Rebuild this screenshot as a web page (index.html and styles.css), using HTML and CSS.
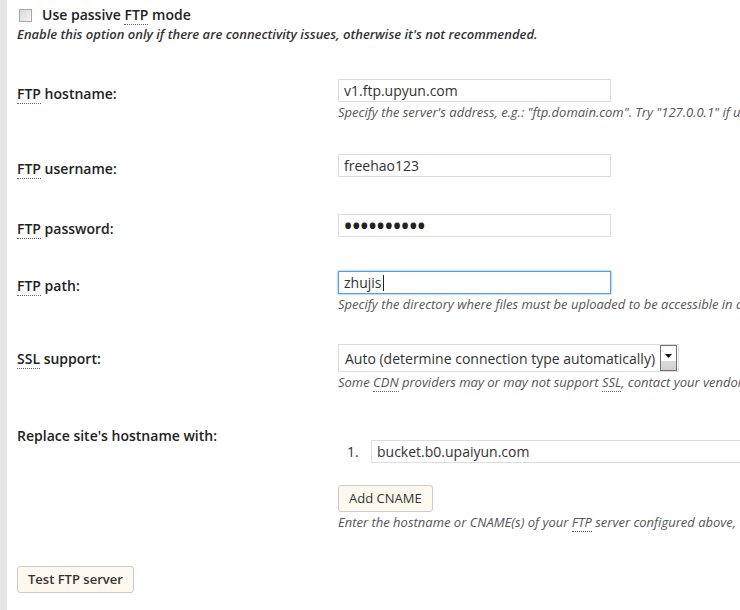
FILE: index.html
```html
<!DOCTYPE html>
<html>
<head>
<meta charset="utf-8">
<link rel="stylesheet" href="styles.css">
</head>
<body>
<div class="strip"></div>
<main class="main">
  <div class="passive">
    <label class="check-line"><input type="checkbox" class="check"><span>Use passive <abbr>FTP</abbr> mode</span></label>
    <p class="note">Enable this option only if there are connectivity issues, otherwise it's not recommended.</p>
  </div>

  <div class="row">
    <div class="label"><abbr>FTP</abbr> hostname:</div>
    <div class="field">
      <input class="text" type="text" value="v1.ftp.upyun.com">
      <p class="desc">Specify the server's address, e.g.: "ftp.domain.com". Try "127.0.0.1" if u</p>
    </div>
  </div>

  <div class="row">
    <div class="label"><abbr>FTP</abbr> username:</div>
    <div class="field">
      <input class="text" type="text" value="freehao123">
    </div>
  </div>

  <div class="row row-short">
    <div class="label"><abbr>FTP</abbr> password:</div>
    <div class="field">
      <input class="text secret" type="password" value="abcdefghij">
    </div>
  </div>

  <div class="row row-path">
    <div class="label"><abbr>FTP</abbr> path:</div>
    <div class="field">
      <span class="focus-wrap"><input class="text focused" type="text" value="zhujis"><span class="caret"></span></span>
      <p class="desc">Specify the directory where files must be uploaded to be accessible in a</p>
    </div>
  </div>

  <div class="row row-ssl">
    <div class="label"><abbr>SSL</abbr> support:</div>
    <div class="field">
      <div class="select">
        <span class="select-text">Auto (determine connection type automatically)</span>
        <span class="select-btn"><svg width="9" height="5" viewBox="0 0 9 5"><path d="M1 0h7L4.5 4z" fill="#111"/></svg></span>
      </div>
      <p class="desc">Some <abbr>CDN</abbr> providers may or may not support <abbr>SSL</abbr>, contact your vendor</p>
    </div>
  </div>

  <div class="row">
    <div class="label">Replace site's hostname with:</div>
    <div class="field">
      <ol class="cnames">
        <li class="cname"><span class="num">1.</span><input class="text wide" type="text" value="bucket.b0.upaiyun.com"></li>
      </ol>
      <button class="btn" type="button">Add CNAME</button>
      <p class="desc">Enter the hostname or CNAME(s) of your <abbr>FTP</abbr> server configured above, t</p>
    </div>
  </div>

  <div class="actions">
    <button class="btn btn-strong" type="button">Test FTP server</button>
  </div>
</main>
</body>
</html>
```

FILE: styles.css
```css
html, body {
  margin: 0;
  padding: 0;
  background: #fff;
}
body {
  display: flex;
  width: 740px;
  height: 610px;
  overflow: hidden;
  font-family: "Open Sans", "DejaVu Sans", sans-serif;
  font-size: 13px;
  color: #222;
}
.strip {
  width: 7px;
  flex: none;
  background: #e5e5e5;
}
.main {
  flex: 1;
  min-width: 0;
  padding-left: 10px;
  overflow: hidden;
}
abbr {
  text-decoration: none;
  border-bottom: 1px dotted #666;
}
.passive {
  padding-top: 5px;
  height: 64px;
  box-sizing: border-box;
}
.check-line {
  display: flex;
  align-items: center;
  height: 20px;
  font-size: 14px;
  font-weight: 600;
  line-height: 20px;
}
.check {
  -webkit-appearance: none;
  appearance: none;
  width: 13px;
  height: 13px;
  margin: 0 10px 0 2px;
  border: 1px solid #a9a9a9;
  box-sizing: border-box;
  background: linear-gradient(135deg, #d9d9d9, #f4f4f4);
}
.note {
  margin: 0;
  font-size: 13px;
  line-height: 18px;
  font-style: italic;
  font-weight: 600;
  color: #333;
  white-space: nowrap;
}
.row {
  display: grid;
  grid-template-columns: 321px max-content;
  min-height: 60px;
  box-sizing: border-box;
}
.row-short { min-height: 57px; }
.label {
  padding-top: 21px;
  font-size: 14px;
  font-weight: 600;
  line-height: 18px;
  color: #222;
  white-space: nowrap;
}
.field {
  padding: 15px 0;
}
.row-path .field { padding-bottom: 13px; }
.row-ssl .field { padding-bottom: 12px; }
.text {
  display: block;
  box-sizing: border-box;
  width: 273px;
  height: 23px;
  margin: 0;
  padding: 0 5px;
  border: 1px solid #ddd;
  font-family: "Open Sans", sans-serif;
  font-size: 14px;
  color: #333;
  background: #fff;
  outline: none;
}
.secret {
  font-size: 27px;
  letter-spacing: -2px;
  color: #222;
  padding-left: 4px;
}
.focus-wrap {
  display: block;
  position: relative;
  width: 273px;
}
.focused {
  border-color: #5b9dd9;
  box-shadow: 0 0 2px rgba(30, 140, 190, 0.8);
}
.caret {
  position: absolute;
  left: 45px;
  top: 4px;
  width: 1px;
  height: 16px;
  background: #222;
}
.desc {
  margin: 1px 0 3px;
  font-size: 13px;
  line-height: 18px;
  font-style: italic;
  color: #555;
  white-space: nowrap;
}
.select {
  display: flex;
  align-items: center;
  box-sizing: border-box;
  width: 341px;
  height: 28px;
  border: 1px solid #ddd;
  padding: 0 1px 0 6px;
  background: #fff;
}
.select-text {
  flex: 1;
  font-size: 14px;
  color: #333;
  white-space: nowrap;
}
.select-btn {
  display: flex;
  justify-content: center;
  padding-top: 8px;
  box-sizing: border-box;
  width: 17px;
  height: 26px;
  border: 1px solid #707070;
  background: linear-gradient(#fff 0, #fff 62%, #dcdcdc 62%, #d0d0d0 100%);
}
.cnames {
  margin: 19px 0 22px;
  padding: 0;
  list-style: none;
}
.cname {
  display: flex;
  align-items: center;
}
.num {
  width: 24px;
  margin-left: 9px;
  font-size: 14px;
  color: #333;
}
.wide {
  width: 420px;
}
.btn {
  display: block;
  box-sizing: border-box;
  height: 27px;
  margin: 0;
  padding: 0 10px;
  border: 1px solid #ccc;
  border-radius: 3px;
  background: #fdf9ef;
  font-family: "Open Sans", sans-serif;
  font-size: 13px;
  color: #333;
  line-height: 25px;
}
.btn-strong {
  font-weight: 600;
}
.actions {
  padding-top: 17px;
}
```
